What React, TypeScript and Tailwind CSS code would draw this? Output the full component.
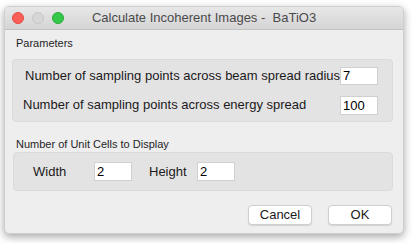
export default function App() {
  return (
    <div className="w-[413px] h-[243px] bg-white pt-[6px] pl-[4px] font-['Liberation_Sans',Arial,sans-serif] whitespace-nowrap">
      <div className="w-[400px] h-[228px] rounded-[5px] bg-[#efeeef] shadow-[0_3px_8px_rgba(0,0,0,0.35)] border border-[#cfcecf] overflow-hidden flex flex-col">
        <div className="h-[23px] shrink-0 flex items-center relative bg-gradient-to-b from-[#e8e7e8] to-[#d6d5d6] border-b border-[#c4c3c4]">
          <div className="flex items-center gap-[8px] pl-[7px]">
            <span className="w-[12px] h-[12px] rounded-full bg-[#fc5f57] border border-[#e24b43]" />
            <span className="w-[12px] h-[12px] rounded-full bg-[#d7d6d7] border border-[#c9c8c9]" />
            <span className="w-[12px] h-[12px] rounded-full bg-[#35c748] border border-[#2aab3a]" />
          </div>
          <div className="absolute inset-0 flex items-center justify-center text-[13px] text-[#4a4a4a]">
            Calculate Incoherent Images -&nbsp; BaTiO3
          </div>
        </div>

        <div className="flex flex-col px-[7px]">
          <div className="h-[15px] leading-[15px] text-[11px] text-[#1e1e1e] mt-[6px] ml-[4px]">Parameters</div>
          <div className="mt-[8px] w-[381px] h-[63px] rounded-[4px] bg-[#e4e3e4] border border-[#dcdbdc] flex flex-col justify-center gap-[11px] pl-[10px]">
            <div className="flex items-center h-[18px]">
              <span className="text-[13px] text-[#1a1a1a] w-[317px] pl-[2px]">Number of sampling points across beam spread radius</span>
              <div className="w-[38px] h-[18px] bg-white border border-[#d0d0d0] text-[13px] leading-[16px] pl-[2px]">7</div>
            </div>
            <div className="flex items-center h-[19px]">
              <span className="text-[13px] text-[#1a1a1a] w-[317px]">Number of sampling points across energy spread</span>
              <div className="w-[38px] h-[19px] bg-white border border-[#d0d0d0] text-[13px] leading-[17px] pl-[2px]">100</div>
            </div>
          </div>

          <div className="h-[15px] leading-[15px] text-[11px] text-[#1e1e1e] mt-[15px] ml-[4px]">Number of Unit Cells to Display</div>
          <div className="w-[380px] h-[39px] ml-[1px] rounded-[4px] bg-[#e4e3e4] border border-[#dcdbdc] flex items-center pl-[19px]">
            <span className="text-[13px] text-[#1a1a1a] w-[61px]">Width</span>
            <div className="w-[38px] h-[19px] bg-white border border-[#d0d0d0] text-[13px] leading-[17px] pl-[2px]">2</div>
            <span className="text-[13px] text-[#1a1a1a] ml-[17px] w-[48px]">Height</span>
            <div className="w-[38px] h-[19px] bg-white border border-[#d0d0d0] text-[13px] leading-[17px] pl-[2px]">2</div>
          </div>

          <div className="flex justify-end gap-[16px] mt-[14px] pr-[4px]">
            <button className="w-[64px] h-[20px] bg-white rounded-[4px] border border-[#cfcfcf] shadow-[0_1px_1px_rgba(0,0,0,0.12)] text-[13px] text-[#1a1a1a] leading-[18px]">Cancel</button>
            <button className="w-[64px] h-[20px] bg-white rounded-[4px] border border-[#cfcfcf] shadow-[0_1px_1px_rgba(0,0,0,0.12)] text-[13px] text-[#1a1a1a] leading-[18px]">OK</button>
          </div>
        </div>
      </div>
    </div>
  );
}
